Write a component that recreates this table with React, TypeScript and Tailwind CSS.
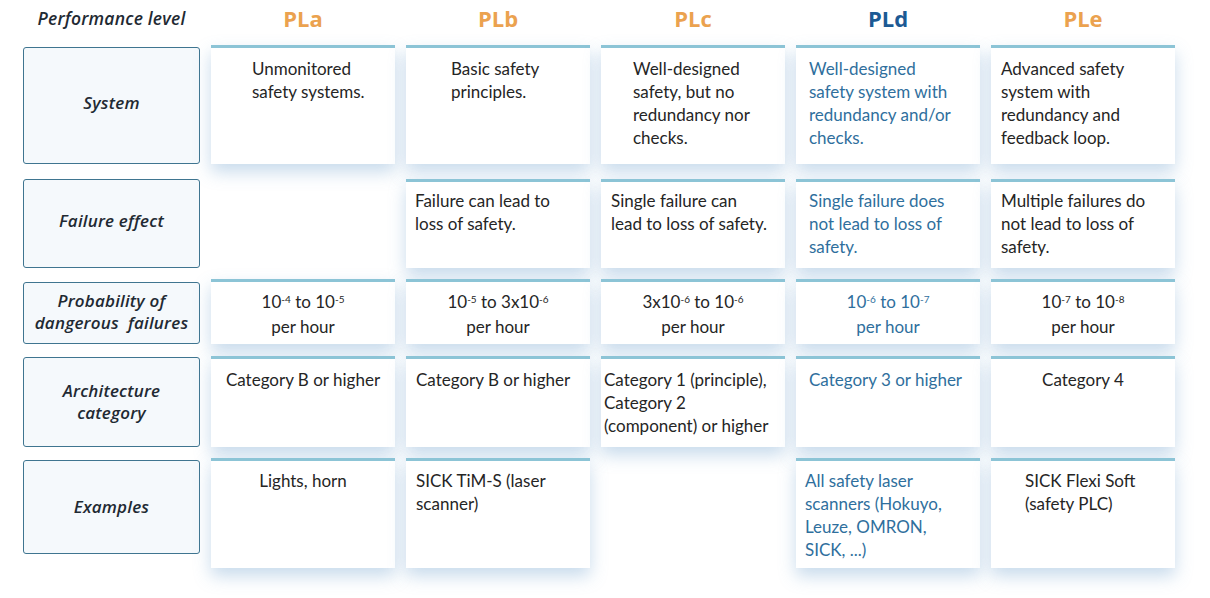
type Cell = { text: React.ReactNode; pad: string } | null

const levels = [
  { name: "PLa", color: "text-[#eba24f]" },
  { name: "PLb", color: "text-[#eba24f]" },
  { name: "PLc", color: "text-[#eba24f]" },
  { name: "PLd", color: "text-[#1c5a94]" },
  { name: "PLe", color: "text-[#eba24f]" },
]

const Pow = ({ base, exp }: { base: string; exp: string }) => (
  <>
    {base}
    <sup className="text-[10px]">{exp}</sup>
  </>
)

const rows: {
  label: React.ReactNode
  rowClass: string
  labelClass: string
  textClass: string
  cells: Cell[]
}[] = [
  {
    label: "System",
    rowClass: "h-[119px]",
    labelClass: "mt-[2px] h-[117px] pb-[5px]",
    textClass: "pt-[9px] leading-[23px]",
    cells: [
      { text: <>Unmonitored<br />safety systems.</>, pad: "pl-[41px]" },
      { text: <>Basic safety<br />principles.</>, pad: "pl-[45px]" },
      { text: <>Well-designed<br />safety, but no<br />redundancy nor<br />checks.</>, pad: "pl-[32px]" },
      { text: <>Well-designed<br />safety system with<br />redundancy and/or<br />checks.</>, pad: "pl-[13px]" },
      { text: <>Advanced safety<br />system with<br />redundancy and<br />feedback loop.</>, pad: "pl-[10px]" },
    ],
  },
  {
    label: "Failure effect",
    rowClass: "mt-[15px] h-[89px]",
    labelClass: "h-[89px] pb-[6px]",
    textClass: "pt-[7px] leading-[23px]",
    cells: [
      null,
      { text: <>Failure can lead to<br />loss of safety.</>, pad: "pl-[9px]" },
      { text: <>Single failure can<br />lead to loss of safety.</>, pad: "pl-[10px]" },
      { text: <>Single failure does<br />not lead to loss of<br />safety.</>, pad: "pl-[13px]" },
      { text: <>Multiple failures do<br />not lead to loss of<br />safety.</>, pad: "pl-[10px]" },
    ],
  },
  {
    label: <>Probability of<br />dangerous&nbsp; failures</>,
    rowClass: "mt-[11px] h-[65px]",
    labelClass: "mt-[3px] h-[62px] pb-[3px]",
    textClass: "pt-[7px] leading-[25px] text-center",
    cells: [
      { text: <><Pow base="10" exp="-4" /> to <Pow base="10" exp="-5" /><br />per hour</>, pad: "" },
      { text: <><Pow base="10" exp="-5" /> to <Pow base="3x10" exp="-6" /><br />per hour</>, pad: "" },
      { text: <><Pow base="3x10" exp="-6" /> to <Pow base="10" exp="-6" /><br />per hour</>, pad: "" },
      { text: <><Pow base="10" exp="-6" /> to <Pow base="10" exp="-7" /><br />per hour</>, pad: "" },
      { text: <><Pow base="10" exp="-7" /> to <Pow base="10" exp="-8" /><br />per hour</>, pad: "" },
    ],
  },
  {
    label: <>Architecture<br />category</>,
    rowClass: "mt-[12px] h-[91px]",
    labelClass: "mt-[1px] h-[90px]",
    textClass: "pt-[9px] leading-[23px]",
    cells: [
      { text: "Category B or higher", pad: "text-center" },
      { text: "Category B or higher", pad: "pl-[10px]" },
      { text: <>Category 1 (principle),<br />Category 2<br />(component) or higher</>, pad: "pl-[3px]" },
      { text: "Category 3 or higher", pad: "pl-[13px]" },
      { text: "Category 4", pad: "text-center" },
    ],
  },
  {
    label: "Examples",
    rowClass: "mt-[11px] h-[110px]",
    labelClass: "mt-[2px] h-[94px]",
    textClass: "pt-[8px] leading-[23px]",
    cells: [
      { text: "Lights, horn", pad: "text-center" },
      { text: <>SICK TiM-S (laser<br />scanner)</>, pad: "pl-[10px]" },
      null,
      { text: <>All safety laser<br />scanners (Hokuyo,<br />Leuze, OMRON,<br />SICK, ...)</>, pad: "pl-[9px]" },
      { text: <>SICK Flexi Soft<br />(safety PLC)</>, pad: "pl-[34px]" },
    ],
  },
]

const labelFont = { fontFamily: "'Open Sans', Lato, sans-serif" }
const bodyFont = { fontFamily: "Lato, 'Noto Sans', sans-serif" }

export default function App() {
  return (
    <div className="h-[598px] w-[1210px] overflow-hidden bg-white pl-[23px]">
      {/* header */}
      <div className="grid h-[45px] grid-cols-[177px_repeat(5,184px)] gap-x-[11px]">
        <div
          style={labelFont}
          className="whitespace-nowrap pt-[6px] text-center text-[17.5px] font-semibold italic leading-[24px] tracking-[0.2px] text-[#1f2a33]"
        >
          Performance level
        </div>
        {levels.map((l) => (
          <div
            key={l.name}
            style={{ fontFamily: "'Open Sans', sans-serif" }}
            className={`pt-[3px] text-center text-[22px] font-bold leading-[30px] ${l.color}`}
          >
            {l.name}
          </div>
        ))}
      </div>

      {rows.map((row, i) => (
        <div key={i} className={`grid grid-cols-[177px_repeat(5,184px)] gap-x-[11px] ${row.rowClass}`}>
          <div
            style={labelFont}
            className={`flex items-center justify-center self-start whitespace-nowrap rounded-[3px] border-[1.5px] border-[#3f7590] bg-[#f5f9fc] text-center text-[17px] font-semibold italic leading-[22px] tracking-[0.2px] text-[#1f2a33] ${row.labelClass}`}
          >
            <span>{row.label}</span>
          </div>
          {row.cells.map((cell, j) =>
            cell ? (
              <div
                key={j}
                style={bodyFont}
                className={`border-t-[3px] border-[#8cc4d6] bg-white text-[17px] shadow-[0_8px_16px_rgba(110,160,205,0.38)] ${row.textClass} ${cell.pad} ${
                  j === 3 ? "text-[#2f6f9d]" : "text-[#252525]"
                }`}
              >
                {cell.text}
              </div>
            ) : (
              <div key={j} />
            )
          )}
        </div>
      ))}
    </div>
  )
}
